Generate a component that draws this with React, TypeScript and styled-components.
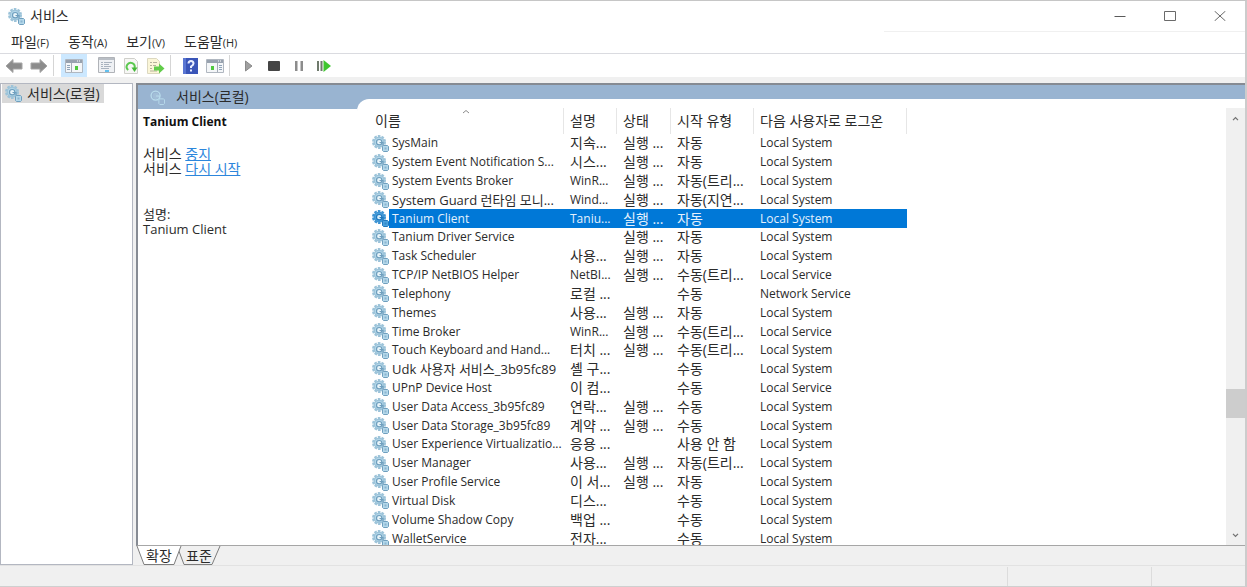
import React from 'react';
import styled, { createGlobalStyle, css } from 'styled-components';

const GlobalStyle = createGlobalStyle`
  * { box-sizing: border-box; }
  body {
    margin: 0;
    background: #f0f0f0;
    color: #2b2b2b;
    font-family: 'Open Sans', 'Noto Sans CJK KR', sans-serif;
    font-size: 12px;
  }
  button {
    margin: 0;
    padding: 0;
    border: 0;
    background: none;
    color: inherit;
    font: inherit;
  }
`;

const Window = styled.div`
  display: flex;
  flex-direction: column;
  height: 100vh;
  min-height: 360px;
  border-top: 1px solid #c6c6c6;
  border-right: 2px solid #cccccc;
  border-bottom: 1px solid #cfcfcf;
  overflow: hidden;
`;

const TitleBar = styled.header`
  display: flex;
  align-items: center;
  height: 30px;
  padding-left: 8px;
  background: #fff;
`;

const Title = styled.h1`
  flex: 1;
  margin: 0 0 0 5px;
  font-size: 14px;
  line-height: 20px;
  font-weight: 400;
`;

const CaptionButton = styled.button`
  display: flex;
  align-items: center;
  justify-content: center;
  width: 50px;
  height: 30px;
`;

const MenuBar = styled.nav`
  display: flex;
  align-items: center;
  gap: 19px;
  height: 23px;
  padding-left: 11px;
  border-bottom: 1px solid #dadbe0;
  background: linear-gradient(#f0f0f0, #f0f0f0) right top / 29% 1px no-repeat #fff;
`;

const MenuItem = styled.button`
  font-size: 14px;
  line-height: 20px;
`;

const Mnemonic = styled.span`
  font-size: 11px;
`;

const Toolbar = styled.div`
  display: flex;
  align-items: center;
  height: 23px;
  padding-left: 2px;
  background: #fff;
`;

const ToolGroup = styled.div<{ $spaced?: boolean }>`
  display: flex;
  gap: 1px;
  margin-right: ${(p) => (p.$spaced ? '7px' : '0')};
`;

const ToolButton = styled.button<{ $active?: boolean }>`
  display: flex;
  align-items: center;
  justify-content: center;
  width: ${(p) => (p.$active ? '26px' : '24px')};
  height: 23px;
  background: ${(p) => (p.$active ? '#cce8ff' : 'transparent')};
`;

const Separator = styled.span`
  width: 1px;
  height: 21px;
  margin: 0 7px 0 2px;
  background: #d5d5d5;
`;

const Main = styled.main`
  display: flex;
  flex: 1;
  gap: 3px;
  min-height: 0;
  padding-top: 6px;
`;

const TreePane = styled.aside`
  width: 133px;
  border: 1px solid #b3b7c1;
  background: #fff;
`;

const TreeItem = styled.button`
  display: flex;
  align-items: center;
  gap: 5px;
  height: 19px;
  margin-left: 1px;
  padding: 0 4px 0 3px;
  background: #d9d9d9;
  font-size: 14px;
  line-height: 19px;
`;

const ResultPane = styled.section`
  display: flex;
  flex: 1;
  flex-direction: column;
  min-width: 0;
`;

const View = styled.div`
  display: flex;
  flex: 1;
  min-height: 0;
  border: solid #868b93;
  border-width: 2px 0 1px 2px;
  border-bottom-color: #a6a6a6;
`;

const DetailColumn = styled.div`
  width: 219px;
  background: #fff;
`;

const Banner = styled.h2`
  display: flex;
  align-items: center;
  gap: 11px;
  height: 24px;
  margin: 0;
  padding-left: 11px;
  background: #99b4d1;
  font-size: 14px;
  line-height: 24px;
  font-weight: 400;
`;

const Details = styled.div`
  padding: 5px 5px 0;
  font-size: 13px;
  line-height: 15px;

  p { margin: 0; }
`;

const ServiceName = styled.h3`
  margin: 0 0 16px;
  font-size: 12px;
  line-height: 16px;
  font-weight: 700;
  color: #111;
`;

const Actions = styled.div`
  margin-bottom: 31px;
  font-size: 14px;
  line-height: 15px;

  a { color: #2c86dc; }
`;

const ListColumn = styled.div`
  flex: 1;
  min-width: 0;
  padding-top: 14px;
  background: #99b4d1;
`;

const ListSheet = styled.div`
  display: flex;
  height: 100%;
  padding: 9px 0 0 15px;
  border-top-left-radius: 12px;
  background: #fff;
`;

const ListViewport = styled.div`
  flex: 1;
  min-width: 0;
  overflow: hidden;
`;

const ServiceTable = styled.table`
  width: 535px;
  height: calc(100% + 3px);
  border-collapse: separate;
  border-spacing: 0;
  table-layout: fixed;
`;

const HeadCell = styled.th<{ $first?: boolean }>`
  position: relative;
  height: 26px;
  padding: 0 0 0 ${(p) => (p.$first ? '3px' : '6px')};
  border-right: 1px solid #e6e6e6;
  font-size: 14px;
  line-height: 18px;
  font-weight: 400;
  text-align: left;
  white-space: nowrap;
`;

const SortMark = styled.svg`
  position: absolute;
  top: 1px;
  left: 90px;
`;

const Row = styled.tr<{ $selected?: boolean }>`
  ${(p) =>
    p.$selected &&
    css`
      color: #e4f1fd;

      td { background: #0078d7; }
      td:first-child { background: linear-gradient(to right, #fff 17px, #0078d7 17px); }
    `}
`;

const Cell = styled.td<{ $size: number }>`
  padding: 0 0 0 6px;
  overflow: hidden;
  font-size: ${(p) => p.$size}px;
  line-height: 18px;
  white-space: nowrap;
`;

const NameCell = styled(Cell)`
  padding: 0;
`;

const NameInner = styled.div`
  display: flex;
  align-items: center;
  gap: 3px;
  height: 18px;
`;

const ScrollBar = styled.div`
  display: flex;
  flex-direction: column;
  width: 19px;
  background: #f0f0f0;
`;

const ScrollArrow = styled.button`
  display: flex;
  align-items: center;
  justify-content: center;
  height: 20px;
`;

const ScrollTrack = styled.div`
  display: flex;
  flex: 1;
  flex-direction: column;
`;

const TrackBefore = styled.div`
  flex: 261;
`;

const Thumb = styled.div`
  flex: 29;
  background: #cdcdcd;
`;

const TrackAfter = styled.div`
  flex: 107;
`;

const Tabs = styled.div`
  display: flex;
  height: 19px;
`;

const Tab = styled.button<{ $active?: boolean }>`
  position: relative;
  z-index: ${(p) => (p.$active ? 1 : 0)};
  width: 46px;
  height: 19px;
  margin-right: -6px;
  font-size: 14px;
  line-height: 19px;

  svg {
    position: absolute;
    inset: 0;
    z-index: -1;
  }
`;

const StatusBar = styled.footer`
  display: flex;
  justify-content: flex-end;
  height: 21px;
  border-top: 1px solid #e2e2e2;
`;

const StatusCell = styled.span<{ $width: number }>`
  width: ${(p) => p.$width}px;
  margin-top: 1px;
  border-left: 1px solid #dcdcdc;
`;

const gearTones = {
  normal: { teeth: '#9cc3d9', edge: '#6f9fbe', body: '#b4d8ea', hole: '#e9f5fa' },
  pale: { teeth: 'none', edge: '#b9dcec', body: '#99b4d1', hole: '#a3bfd8' },
  selected: { teeth: '#3c93d3', edge: '#1f78bd', body: '#4ba0dc', hole: '#d9effc' },
};

function Gear({ tone = 'normal', size = 17 }: { tone?: keyof typeof gearTones; size?: number }) {
  const { teeth, edge, body, hole } = gearTones[tone];
  return (
    <svg width={size} height={size} viewBox="0 0 17 17" fill="none" aria-hidden="true">
      <circle cx="7" cy="7" r="6" stroke={teeth} strokeWidth="2" strokeDasharray="2.6 1.17" />
      <circle cx="7" cy="7" r="4.8" fill={body} stroke={tone === 'pale' ? edge : teeth} strokeWidth="1.4" />
      <circle cx="7.2" cy="7.2" r="2.7" fill={hole} stroke={tone === 'pale' ? hole : edge} strokeWidth="1.2" />
      <path d="M7.5 7.500h3.500v3" stroke={edge} strokeWidth="1.2" />
      <path d="M11.500 10.500h4l1 1v4l-1 1h-4l-1-1v-4z" fill={body} stroke={edge} />
      <path d="M12.500 12.500h2v2h-2z" fill={tone === 'pale' ? body : edge} opacity=".6" />
    </svg>
  );
}

function Arrow({ flip }: { flip?: boolean }) {
  return (
    <svg width="18" height="16" viewBox="0 0 18 16" aria-hidden="true">
      <path
        d={flip ? 'M17 8 10 1.5V5H1v6h9v3.5z' : 'M1 8l7-6.5V5h9v6H8v3.5z'}
        fill="#8c8c8c"
        stroke="#a5a5a5"
      />
    </svg>
  );
}

function PanelIcon({ flip }: { flip?: boolean }) {
  return (
    <svg width="18" height="14" viewBox="0 0 18 14" aria-hidden="true">
      <path d="M.5.5h17v13H.5z" fill="#f4f6f8" stroke="#b0b7c0" />
      <path d="M1 1h16v3H1z" fill="#98a2af" />
      <path d="M12 2h1M14 2h1" stroke="#fff" />
      <path d={flip ? 'M11.5 4v9' : 'M6.5 4v9'} stroke="#a3abb5" />
      <path d={flip ? 'M13 6.5h3M13 8.5h3M13 10.5h3' : 'M2 6.5h3M2 8.5h3M2 10.5h3'} stroke="#8fa3b8" />
      <path d={flip ? 'M5 7h3v4H5z' : 'M10 7h3v4h-3z'} fill="#4fc83e" />
    </svg>
  );
}

function PropertiesIcon() {
  return (
    <svg width="17" height="17" viewBox="0 0 17 17" aria-hidden="true">
      <path d="M.5.5h16v15H.5z" fill="#eff1f4" stroke="#b0b3b8" />
      <path d="M1 1h15v2H1z" fill="#b9bec5" />
      <path d="M3 5.5h2M6 5.5h8M3 7.5h2M6 7.5h5M3 9.5h2M6 9.5h7M3 11.5h8" stroke="#a9b3bf" />
      <path d="M7 13h4v2H7z" fill="#62c0ee" />
    </svg>
  );
}

function RefreshIcon() {
  return (
    <svg width="14" height="16" viewBox="0 0 14 16" fill="none" aria-hidden="true">
      <path d="M.5.5h10l3 3v12H.5z" fill="#f7f7f5" stroke="#cfcfca" />
      <path d="M4.2 12A4 4 0 1 1 10.5 10" stroke="#5cc850" strokeWidth="2" />
      <path d="M7.5 9.5h6L10.5 14z" fill="#45b838" />
    </svg>
  );
}

function ExportIcon() {
  return (
    <svg width="18" height="16" viewBox="0 0 18 16" aria-hidden="true">
      <path d="M.5.5h9l3 3v12H.5z" fill="#fbf6d8" stroke="#dcd8c0" />
      <path d="M3 4.5h2M6 4.5h4M3 7.5h2M6 7.5h3M3 10.5h2M3 13h7" stroke="#b5b29a" />
      <path d="M7 8.5h5V5.5l5.500 5-5.500 5v-3H7z" fill="#62cc4a" />
    </svg>
  );
}

function HelpIcon() {
  return (
    <svg width="15" height="16" viewBox="0 0 15 16" fill="none" aria-hidden="true">
      <path d="M0 0h15v16H0z" fill="#3a55b8" />
      <path d="M0 0h3v16H0z" fill="#5a76d2" />
      <path d="M5.5 5.5Q5.5 3 8 3t2.5 2.5Q10.5 7 8 8.5V10" stroke="#e8edff" strokeWidth="2" />
      <path d="M7 11.5h2v2H7z" fill="#e8edff" />
    </svg>
  );
}

const minimizeIcon = (
  <svg width="12" height="12" viewBox="0 0 12 12" aria-hidden="true">
    <path d="M.5 6.5h11" stroke="#5a5a5a" />
  </svg>
);
const maximizeIcon = (
  <svg width="12" height="10" viewBox="0 0 12 10" aria-hidden="true">
    <path d="M.5.5h11v9H.5z" fill="none" stroke="#6a6a6a" />
  </svg>
);
const closeIcon = (
  <svg width="12" height="10" viewBox="0 0 12 10" aria-hidden="true">
    <path d="M.5 0l11 10M11.5 0l-11 10" stroke="#6a6a6a" />
  </svg>
);

function Chevron({ down }: { down?: boolean }) {
  return (
    <svg width="7" height="5" viewBox="0 0 8 6" fill="none" aria-hidden="true">
      <path d={down ? 'M1 1l3 3 3-3' : 'M1 5l3-3 3 3'} stroke="#707070" strokeWidth="1.5" />
    </svg>
  );
}

type Service = [name: string, description: string, state: string, startup: string, logOn: string];

const RUN = '실행 ...';
const SYSTEM = 'Local System';
const LOCAL = 'Local Service';

const services: Service[] = [
  ['SysMain', '지속...', RUN, '자동', SYSTEM],
  ['System Event Notification S...', '시스...', RUN, '자동', SYSTEM],
  ['System Events Broker', 'WinR...', RUN, '자동(트리...', SYSTEM],
  ['System Guard 런타임 모니...', 'Wind...', RUN, '자동(지연...', SYSTEM],
  ['Tanium Client', 'Taniu...', RUN, '자동', SYSTEM],
  ['Tanium Driver Service', '', RUN, '자동', SYSTEM],
  ['Task Scheduler', '사용...', RUN, '자동', SYSTEM],
  ['TCP/IP NetBIOS Helper', 'NetBI...', RUN, '수동(트리...', LOCAL],
  ['Telephony', '로컬 ...', '', '수동', 'Network Service'],
  ['Themes', '사용...', RUN, '자동', SYSTEM],
  ['Time Broker', 'WinR...', RUN, '수동(트리...', LOCAL],
  ['Touch Keyboard and Hand...', '터치 ...', RUN, '수동(트리...', SYSTEM],
  ['Udk 사용자 서비스_3b95fc89', '셸 구...', '', '수동', SYSTEM],
  ['UPnP Device Host', '이 컴...', '', '수동', LOCAL],
  ['User Data Access_3b95fc89', '연락...', RUN, '수동', SYSTEM],
  ['User Data Storage_3b95fc89', '계약 ...', RUN, '수동', SYSTEM],
  ['User Experience Virtualizatio...', '응용 ...', '', '사용 안 함', SYSTEM],
  ['User Manager', '사용...', RUN, '자동(트리...', SYSTEM],
  ['User Profile Service', '이 서...', RUN, '자동', SYSTEM],
  ['Virtual Disk', '디스...', '', '수동', SYSTEM],
  ['Volume Shadow Copy', '백업 ...', '', '수동', SYSTEM],
  ['WalletService', '전자...', '', '수동', SYSTEM],
];

const columns = [
  { label: '이름', width: 192 },
  { label: '설명', width: 53 },
  { label: '상태', width: 54 },
  { label: '시작 유형', width: 83 },
  { label: '다음 사용자로 로그온', width: 153 },
];

const menus = [
  ['파일', 'F'],
  ['동작', 'A'],
  ['보기', 'V'],
  ['도움말', 'H'],
];

const sizeFor = (text: string) => {
  if (/^[가-힣]/.test(text)) return 14;
  return /[가-힣]/.test(text) ? 13 : 12;
};

export default function App() {
  return (
    <>
      <GlobalStyle />
      <Window lang="ko">
        <TitleBar>
          <Gear />
          <Title>서비스</Title>
          <CaptionButton aria-label="최소화">{minimizeIcon}</CaptionButton>
          <CaptionButton aria-label="최대화">{maximizeIcon}</CaptionButton>
          <CaptionButton aria-label="닫기">{closeIcon}</CaptionButton>
        </TitleBar>

        <MenuBar>
          {menus.map(([label, key]) => (
            <MenuItem key={key}>
              {label}
              <Mnemonic>({key})</Mnemonic>
            </MenuItem>
          ))}
        </MenuBar>

        <Toolbar role="toolbar">
          <ToolGroup>
            <ToolButton aria-label="뒤로"><Arrow /></ToolButton>
            <ToolButton aria-label="앞으로"><Arrow flip /></ToolButton>
          </ToolGroup>
          <Separator />
          <ToolGroup $spaced>
            <ToolButton $active aria-label="콘솔 트리"><PanelIcon /></ToolButton>
          </ToolGroup>
          <ToolGroup>
            <ToolButton aria-label="속성"><PropertiesIcon /></ToolButton>
            <ToolButton aria-label="새로 고침"><RefreshIcon /></ToolButton>
            <ToolButton aria-label="목록 내보내기"><ExportIcon /></ToolButton>
          </ToolGroup>
          <Separator />
          <ToolGroup>
            <ToolButton aria-label="도움말"><HelpIcon /></ToolButton>
            <ToolButton aria-label="작업 창"><PanelIcon flip /></ToolButton>
          </ToolGroup>
          <Separator />
          <ToolGroup>
            <ToolButton aria-label="시작">
              <svg width="8" height="12" viewBox="0 0 8 12"><path d="M.5 1v10L7 6z" fill="#a0a0a0" stroke="#8a8a8a" /></svg>
            </ToolButton>
            <ToolButton aria-label="중지">
              <svg width="12" height="12" viewBox="0 0 12 12"><rect y="1" width="12" height="10" rx="1" fill="#454545" /></svg>
            </ToolButton>
            <ToolButton aria-label="일시 중지">
              <svg width="10" height="12" viewBox="0 0 10 12"><path d="M1 1h2.500v10H1zM6.500 1H9v10H6.500z" fill="#8c8c8c" /></svg>
            </ToolButton>
            <ToolButton aria-label="다시 시작">
              <svg width="14" height="12" viewBox="0 0 14 12">
                <path d="M0 1h2v10H0zM3.500 1h2v10h-2z" fill="#6f7a6c" />
                <path d="M6.500 0v12L14 6z" fill="#3fc62f" />
              </svg>
            </ToolButton>
          </ToolGroup>
        </Toolbar>

        <Main>
          <TreePane>
            <TreeItem>
              <Gear />
              서비스(로컬)
            </TreeItem>
          </TreePane>

          <ResultPane>
            <View>
              <DetailColumn>
                <Banner>
                  <Gear tone="pale" size={16} />
                  서비스(로컬)
                </Banner>
                <Details>
                  <ServiceName>Tanium Client</ServiceName>
                  <Actions>
                    <div>서비스 <a href="#stop">중지</a></div>
                    <div>서비스 <a href="#restart">다시 시작</a></div>
                  </Actions>
                  <p>설명:</p>
                  <p>Tanium Client</p>
                </Details>
              </DetailColumn>

              <ListColumn>
                <ListSheet>
                  <ListViewport>
                    <ServiceTable>
                      <colgroup>
                        {columns.map((c) => (
                          <col key={c.label} style={{ width: c.width }} />
                        ))}
                      </colgroup>
                      <thead>
                        <tr>
                          {columns.map((c, i) => (
                            <HeadCell key={c.label} $first={i === 0} scope="col">
                              {c.label}
                              {i === 0 && (
                                <SortMark width="8" height="5" viewBox="0 0 8 5" fill="none">
                                  <path d="M1 4l3-2.500L7 4" stroke="#8a8a8a" />
                                </SortMark>
                              )}
                            </HeadCell>
                          ))}
                        </tr>
                      </thead>
                      <tbody>
                        {services.map(([name, ...rest]) => {
                          const selected = name === 'Tanium Client';
                          return (
                            <Row key={name} $selected={selected}>
                              <NameCell $size={sizeFor(name)}>
                                <NameInner>
                                  <Gear tone={selected ? 'selected' : 'normal'} />
                                  {name}
                                </NameInner>
                              </NameCell>
                              {rest.map((text, i) => (
                                <Cell key={i} $size={sizeFor(text)}>{text}</Cell>
                              ))}
                            </Row>
                          );
                        })}
                      </tbody>
                    </ServiceTable>
                  </ListViewport>
                  <ScrollBar>
                    <ScrollArrow aria-label="위로"><Chevron /></ScrollArrow>
                    <ScrollTrack>
                      <TrackBefore />
                      <Thumb />
                      <TrackAfter />
                    </ScrollTrack>
                    <ScrollArrow aria-label="아래로"><Chevron down /></ScrollArrow>
                  </ScrollBar>
                </ListSheet>
              </ListColumn>
            </View>

            <Tabs role="tablist">
              <Tab $active role="tab" aria-selected="true">
                <svg width="46" height="19" viewBox="0 0 46 19">
                  <path d="M1 0l7 18.500h30L45 0" fill="#fff" stroke="#7d7d7d" />
                </svg>
                확장
              </Tab>
              <Tab role="tab" aria-selected="false">
                <svg width="46" height="19" viewBox="0 0 46 19">
                  <path d="M1 0l7 18.500h28L44 0" fill="#f0f0f0" stroke="#7d7d7d" />
                </svg>
                표준
              </Tab>
            </Tabs>
          </ResultPane>
        </Main>

        <StatusBar>
          <StatusCell $width={144} />
          <StatusCell $width={94} />
        </StatusBar>
      </Window>
    </>
  );
}
